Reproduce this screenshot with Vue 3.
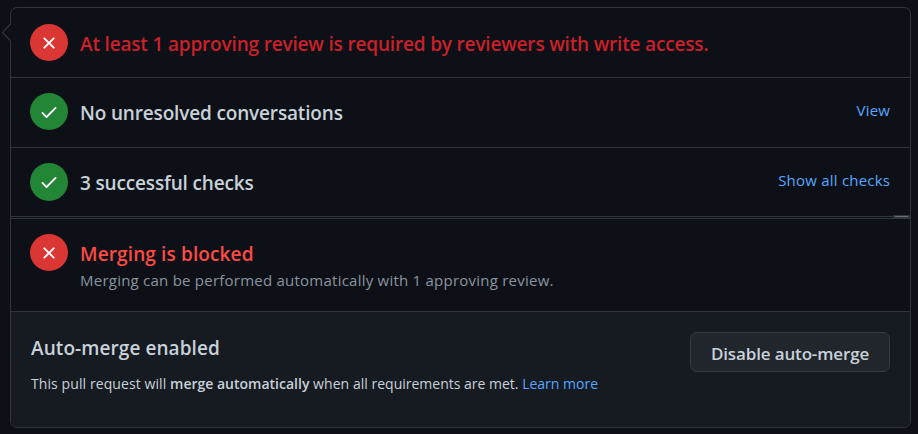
<script setup>
const rows = [
  { state: 'fail', title: 'At least 1 approving review is required by reviewers with write access.', tone: 'danger', key: 'review' },
  { state: 'pass', title: 'No unresolved conversations', tone: 'plain', key: 'conversations', action: 'View' },
  { state: 'pass', title: '3 successful checks', tone: 'plain', key: 'checks', action: 'Show all checks' },
  { state: 'fail', title: 'Merging is blocked', tone: 'bright', key: 'blocked', note: 'Merging can be performed automatically with 1 approving review.' },
]
</script>

<template>
  <main class="page">
    <section class="box">
      <svg class="caret" width="10" height="20" viewBox="0 0 10 20">
        <path class="caret-fill" d="M10 1 L1.5 9.5 L10 18.5 Z" />
        <path class="caret-line" d="M9.5 1 L1.5 9.5 L9.5 18" />
      </svg>
      <div v-for="row in rows" :key="row.key" class="row" :class="row.key">
        <span class="badge" :class="row.state">
          <svg width="20" height="20" viewBox="0 0 16 16">
            <path v-if="row.state === 'pass'" d="M13.78 4.22a.75.75 0 010 1.06l-7.25 7.25a.75.75 0 01-1.06 0L2.22 9.28a.75.75 0 011.06-1.06L6 10.94l6.72-6.72a.75.75 0 011.06 0z" />
            <path v-else d="M3.72 3.72a.75.75 0 011.06 0L8 6.94l3.22-3.22a.75.75 0 111.06 1.06L9.06 8l3.22 3.22a.75.75 0 11-1.06 1.06L8 9.06l-3.22 3.22a.75.75 0 01-1.06-1.06L6.94 8 3.72 4.78a.75.75 0 010-1.06z" />
          </svg>
        </span>
        <div class="body">
          <h3 class="title"><span :class="row.tone">{{ row.title }}</span></h3>
          <p v-if="row.note" class="note"><span>{{ row.note }}</span></p>
        </div>
        <a v-if="row.action" class="link action">{{ row.action }}</a>
        <span v-if="row.key === 'checks'" class="scroller"><i></i></span>
      </div>
      <footer class="footer">
        <div class="auto">
          <h3 class="title"><span>Auto-merge enabled</span></h3>
          <p class="desc"><span>This pull request will </span><b>merge automatically</b> <span>when </span>all requirements are met. <a class="link">Learn more</a></p>
        </div>
        <button class="button" type="button">Disable auto-merge</button>
      </footer>
    </section>
  </main>
</template>

<style>
body {
  margin: 0;
  background: #0d1117;
}
</style>

<style scoped>
.page {
  box-sizing: border-box;
  height: 434px;
  padding: 7px 7px 6px 10px;
  background: #0d1117;
  color: #c9d1d9;
  font-family: "Open Sans", "Noto Sans", sans-serif;
  font-size: 15px;
  white-space: nowrap;
}
.box {
  position: relative;
  box-sizing: border-box;
  height: 421px;
  border: 1px solid #30363d;
  border-radius: 7px;
}
.caret {
  position: absolute;
  left: -10px;
  top: 15px;
}
.caret-fill { fill: #0d1117; }
.caret-line { fill: none; stroke: #30363d; stroke-width: 1.1; }
.row {
  position: relative;
  box-sizing: border-box;
  display: flex;
  align-items: flex-start;
  height: 70px;
  padding: 15px 20px 0 19px;
  border-bottom: 1px solid #30363d;
}
.review { padding-top: 16px; }
.checks { height: 69px; }
.blocked {
  height: 94px;
  margin-top: 1px;
  border-top: 1px solid #30363d;
}
.badge {
  flex: none;
  display: flex;
  align-items: center;
  justify-content: center;
  width: 38px;
  height: 38px;
  margin-right: 12px;
  border-radius: 50%;
}
.badge svg { fill: #fff; }
.pass { background: #238636; }
.fail { background: #da3633; height: 37px; }
.conversations .badge { height: 37px; }
.conversations .badge svg { margin-top: 1px; }
.body { flex: 1; padding-top: 8px; }
.title {
  margin: 0;
  font-size: 19px;
  line-height: 24px;
  font-weight: 600;
  letter-spacing: 0.08px;
}
.danger { color: #cb2029; letter-spacing: -0.17px; }
.plain { letter-spacing: -0.16px; }
.bright { color: #ff4a45; letter-spacing: 0.13px; }
.note {
  margin: 4px 0 0;
  font-size: 15px;
  line-height: 20px;
  letter-spacing: 0.235px;
  color: #8b949e;
}
.link { color: #58a6ff; }
.action {
  padding-top: 7px;
  line-height: 20px;
  letter-spacing: 0.22px;
  margin-right: -0.22px;
}
.scroller {
  position: absolute;
  right: 0;
  bottom: -2px;
  width: 17px;
  height: 3px;
  background: #30363d;
}
.scroller i {
  display: block;
  height: 1px;
  margin: 1px 2px;
  background: #6b6f75;
}
.footer {
  display: flex;
  justify-content: space-between;
  align-items: flex-start;
  box-sizing: border-box;
  height: 115px;
  padding: 20px 20px 0;
  background: #161b22;
  border-radius: 0 0 6px 6px;
}
.auto { padding-top: 4px; }
.desc {
  margin: 14px 0 0;
  font-size: 14px;
  line-height: 20px;
}
.desc span { letter-spacing: 0.09px; }
.desc b { font-weight: 600; }
.button {
  box-sizing: border-box;
  width: 200px;
  height: 40px;
  padding: 3px 0 0;
  border: 1px solid #363b42;
  border-radius: 7px;
  background: #21262d;
  color: #c9d1d9;
  font: 600 17px/24px "Open Sans", "Noto Sans", sans-serif;
  letter-spacing: -0.14px;
}
</style>
